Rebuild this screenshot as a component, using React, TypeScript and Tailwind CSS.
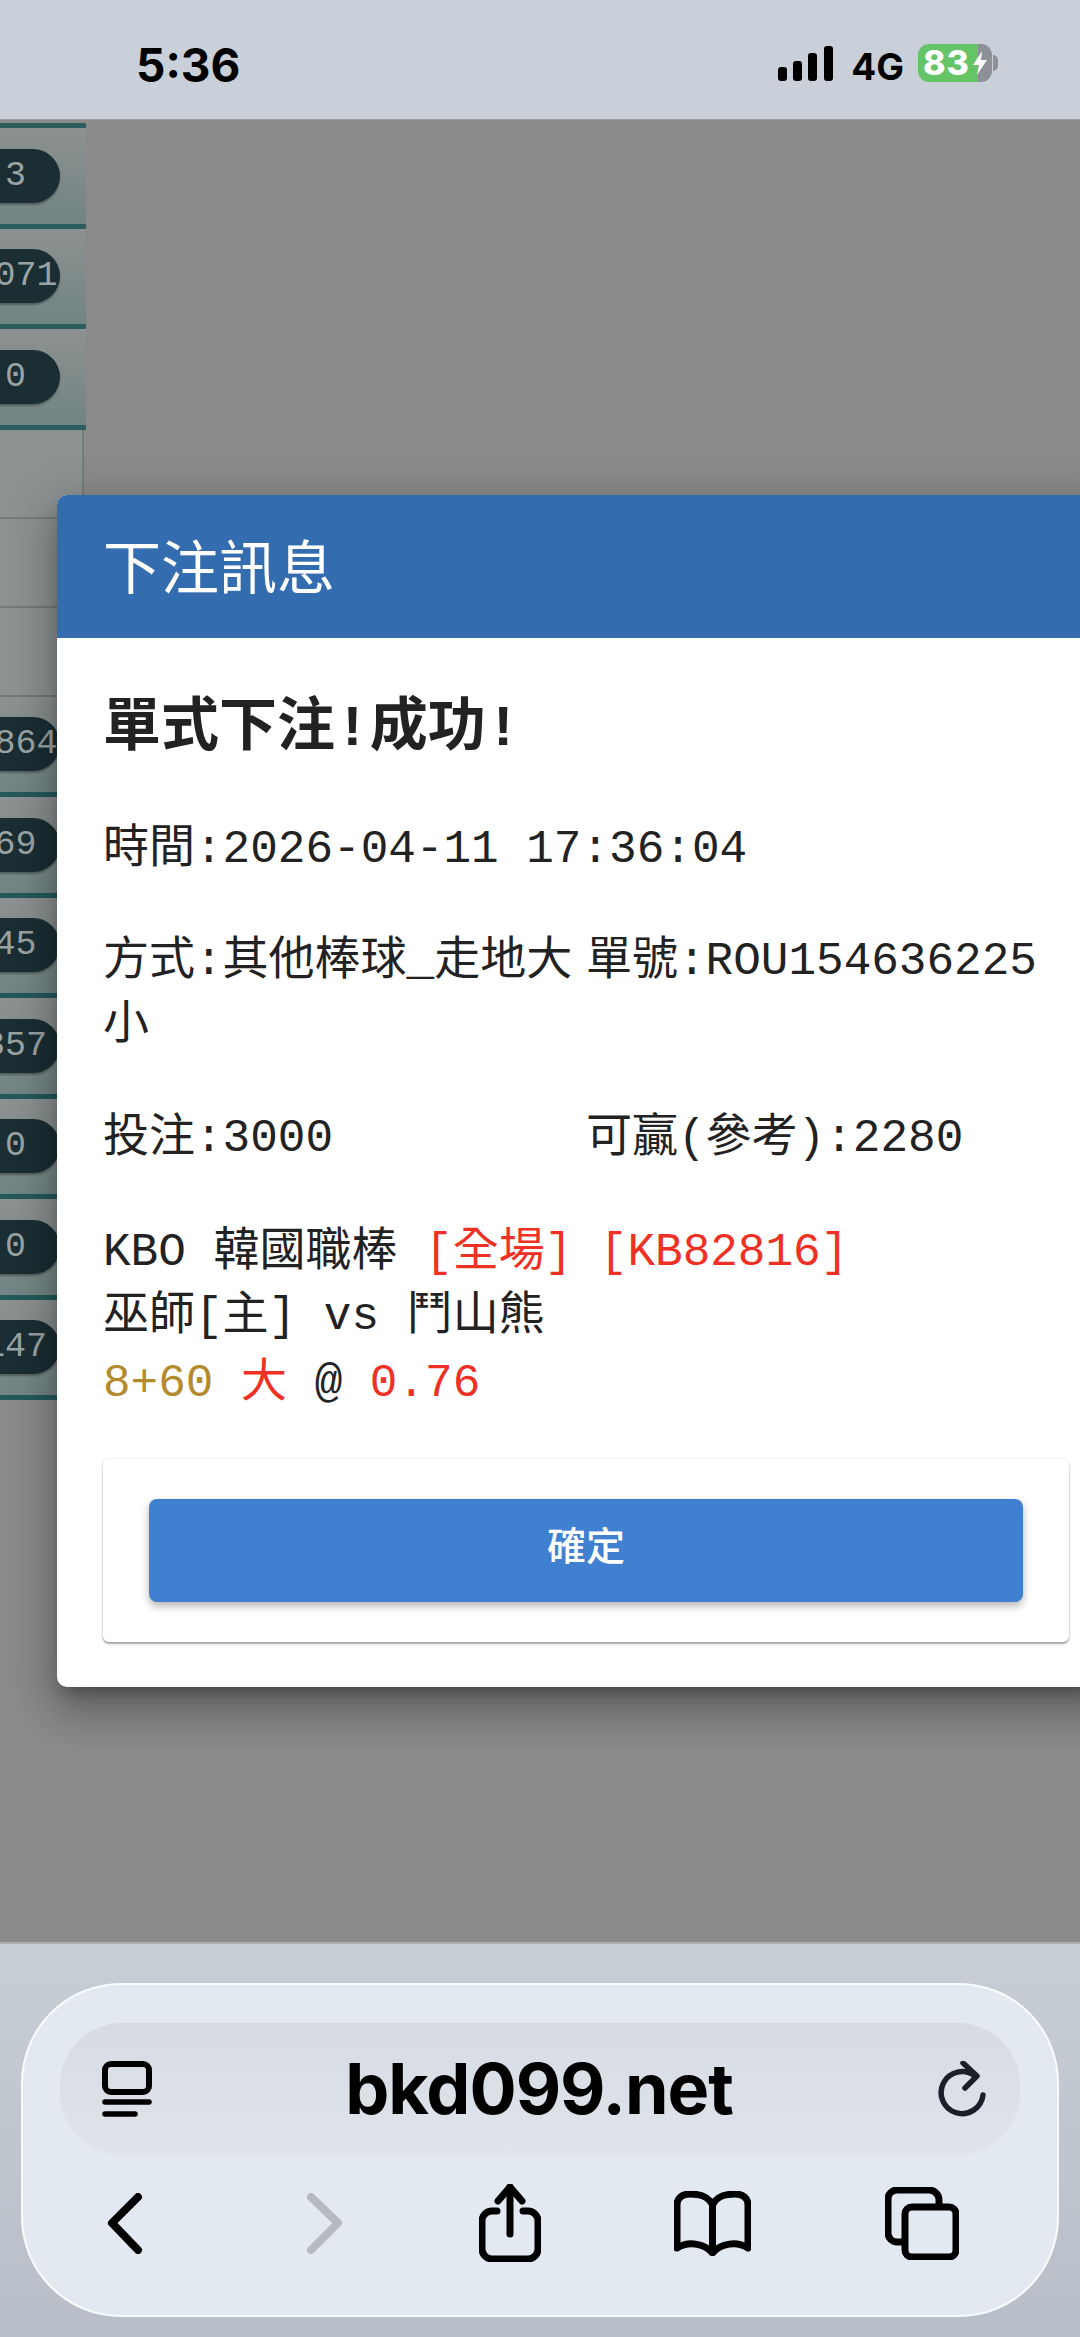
const MONO = "font-['Liberation_Mono','Noto_Sans_CJK_TC',monospace]";

const TOP_ROWS = ["3", "1071", "0"];
const LOWER_ROWS = ["3864", "69", "45", "357", "0", "0", "147"];

function Pill({ value }: { value: string }) {
  return (
    <div className="ml-[-29px] flex h-[54px] w-[89px] shrink-0 items-center justify-center whitespace-nowrap rounded-full bg-[#1a2e33] text-[35px] text-[#9aa3a3] shadow-[0_2px_2px_rgba(0,0,0,0.3)]">
      {value}
    </div>
  );
}

function BackgroundTable() {
  return (
    <div className={`w-[86px] overflow-hidden pt-[3px] ${MONO}`}>
      <div className="border-t-[5px] border-[#2a5d5e]" />
      {TOP_ROWS.map((v, i) => (
        <div
          key={i}
          className="flex h-[100.5px] items-center border-b-[5px] border-[#2a5d5e] bg-gradient-to-b from-[#8d9191] to-[#718583]"
        >
          <Pill value={v} />
        </div>
      ))}
      {[0, 1, 2].map((i) => (
        <div
          key={i}
          className="h-[89px] w-[84px] border-r-[2px] border-b-[2px] border-[#777a7a] bg-[#8c9292]"
        />
      ))}
      {LOWER_ROWS.map((v, i) => (
        <div
          key={i}
          className="flex h-[100.5px] items-center border-b-[5px] border-[#24595c] bg-gradient-to-b from-[#8d9191] to-[#718583]"
        >
          <Pill value={v} />
        </div>
      ))}
    </div>
  );
}

function StatusBar() {
  return (
    <div className="relative flex h-[119px] shrink-0 items-start bg-[#c9d0d9] font-['Inter',sans-serif] text-black">
      <div className="ml-[136px] mt-[35px] text-[46px] font-bold leading-[60px]">5:36</div>
      <div className="ml-auto mr-[82px] mt-[44px] flex items-start">
        <svg width="55" height="37" viewBox="0 0 55 37" className="mt-[2px]">
          <rect x="0" y="21" width="9" height="14" rx="3" fill="#000" />
          <rect x="15" y="15" width="9" height="20" rx="3" fill="#000" />
          <rect x="30" y="7" width="9" height="28" rx="3" fill="#000" />
          <rect x="46" y="0" width="9" height="35" rx="3" fill="#000" />
        </svg>
        <div className="ml-[18px] mt-[1px] text-[37px] font-bold leading-[44px]">4G</div>
        <div className="ml-[14px] flex h-[38px] w-[74px] items-center overflow-hidden rounded-[11px] bg-[linear-gradient(90deg,#65c466_81%,#8e9097_81%)] pl-[5px]">
          <span className="text-[34px] font-extrabold leading-none tracking-[1px] text-white">83</span>
          <svg width="14" height="24" viewBox="0 0 14 24" className="ml-[3px] shrink-0">
            <polygon points="9,0 0,14 6,14 4,24 14,9 8,9" fill="#fff" />
          </svg>
        </div>
        <div className="ml-[1px] mt-[11px] h-[16px] w-[5px] rounded-r-full bg-[#8e9097]" />
      </div>
    </div>
  );
}

function Modal() {
  return (
    <div className="absolute left-[57px] top-[375px] w-[1055px] overflow-hidden rounded-[10px] bg-white shadow-[0_11px_15px_-7px_rgba(0,0,0,0.3),0_24px_38px_3px_rgba(0,0,0,0.2),0_9px_46px_8px_rgba(0,0,0,0.14)]">
      <div className="flex h-[143px] items-center bg-[#336db0] pb-[6px] pl-[46px] font-['Noto_Sans_CJK_TC',sans-serif] text-[58px] leading-none text-white">
        下注訊息
      </div>
      <div className={`pb-[45px] pl-[46px] pr-[43px] pt-[60px] text-[46px] leading-[64px] text-[#222] ${MONO}`}>
        <div className="text-[58px] font-bold">單式下注!成功!</div>
        <div className="mt-[56px]">時間:2026-04-11 17:36:04</div>
        <div className="mt-[48px] grid grid-cols-[483px_1fr]">
          <div>方式:其他棒球_走地大 小</div>
          <div>單號:ROU154636225</div>
        </div>
        <div className="mt-[49px] grid grid-cols-[483px_1fr]">
          <div>投注:3000</div>
          <div>可贏(參考):2280</div>
        </div>
        <div className="mt-[50px] whitespace-pre">
          <div>
            KBO 韓國職棒 <span className="text-[#ee3124]">[全場] [KB82816]</span>
          </div>
          <div>巫師[主] vs 鬥山熊</div>
          <div className="mt-[3px]">
            <span className="text-[#b38b2e]">8+60</span> <span className="text-[#ee3124]">大</span> @{" "}
            <span className="text-[#ee3124]">0.76</span>
          </div>
        </div>
        <div className="mt-[43px] rounded-[6px] bg-white pl-[46px] pr-[46px] py-[40px] shadow-[0_2px_2px_rgba(0,0,0,0.35),0_0_3px_rgba(0,0,0,0.1)]">
          <button className="flex h-[103px] w-full items-center justify-center rounded-[8px] bg-[#4080d0] pb-[15px] font-['Noto_Sans_CJK_TC',sans-serif] text-[39px] font-medium text-white shadow-[0_4px_8px_rgba(0,0,0,0.3)]">
            確定
          </button>
        </div>
      </div>
    </div>
  );
}

function BottomBar() {
  return (
    <div className="h-[395px] shrink-0 border-t-[2px] border-[#a9aeb5] bg-gradient-to-b from-[#c8ced6] to-[#b7bec7] px-[21px] pt-[39px]">
      <div className="h-[334px] rounded-[100px] border-[2px] border-white/80 bg-[#e3e9f1] pt-[38px]">
        <div className="mx-[37px] flex h-[132px] items-center justify-between rounded-[62px] bg-gradient-to-b from-[#d7dce4] to-[#dfe4eb] pl-[42px] pr-[34px]">
          <svg width="50" height="56" viewBox="0 0 50 56">
            <rect x="3" y="3" width="44" height="28" rx="6" fill="none" stroke="#000" strokeWidth="6" />
            <line x1="3" y1="41" x2="47" y2="41" stroke="#000" strokeWidth="5.5" strokeLinecap="round" />
            <line x1="3" y1="53" x2="33" y2="53" stroke="#000" strokeWidth="5.5" strokeLinecap="round" />
          </svg>
          <div className="mr-[12px] font-['Inter',sans-serif] text-[70px] font-bold leading-none tracking-[-1px] text-black">bkd099.net</div>
          <svg width="48" height="56" viewBox="0 0 48 56" fill="none" stroke="#1a1f2a" strokeWidth="5.5" strokeLinecap="round" strokeLinejoin="round">
            <path d="M37 15 A 21 21 0 1 0 45 34" />
            <path d="M25 2 L39 15 L27 27" />
          </svg>
        </div>
        <div className="mt-[29px] flex items-center pl-[84px]">
          <svg width="36" height="61" viewBox="0 0 36 61" fill="none" stroke="#000" strokeWidth="8" strokeLinecap="round" strokeLinejoin="round">
            <polyline points="31,4 5,30 31,57" />
          </svg>
          <svg width="37" height="61" viewBox="0 0 37 61" fill="none" stroke="#b5b9c0" strokeWidth="8" strokeLinecap="round" strokeLinejoin="round" className="ml-[163px]">
            <polyline points="5,4 32,30 5,57" />
          </svg>
          <svg width="62" height="78" viewBox="0 0 62 78" fill="none" stroke="#000" strokeWidth="7" strokeLinecap="round" strokeLinejoin="round" className="ml-[136px]">
            <path d="M31 50 V3" />
            <path d="M19 17 L31 3 L43 17" />
            <path d="M18 27 H13 a10 10 0 0 0 -10 10 V65 a10 10 0 0 0 10 10 H49 a10 10 0 0 0 10 -10 V37 a10 10 0 0 0 -10 -10 H44" />
          </svg>
          <svg width="77" height="65" viewBox="0 0 77 65" fill="none" stroke="#000" strokeWidth="7" strokeLinecap="round" strokeLinejoin="round" className="ml-[133px]">
            <path d="M38.5 60 V14 C34 5 26 3 16 3 C8 3 3 7 3 14 V57 C14 50 30 52 38.5 62 C47 52 63 50 74 57 V14 C74 7 69 3 61 3 C51 3 43 5 38.5 14" />
          </svg>
          <svg width="74" height="73" viewBox="0 0 74 73" fill="none" stroke="#000" strokeWidth="7" strokeLinejoin="round" className="ml-[134px]">
            <path d="M17 55 H12 a9 9 0 0 1 -9 -9 V12 a9 9 0 0 1 9 -9 H44 a10 10 0 0 1 10 10 V17" />
            <rect x="20" y="20" width="51" height="50" rx="7" />
          </svg>
        </div>
      </div>
    </div>
  );
}

export default function App() {
  return (
    <div className="flex h-[2337px] w-[1080px] flex-col overflow-hidden bg-[#8a8a8a]">
      <StatusBar />
      <div className="relative flex-1 overflow-hidden border-t-[1px] border-[#9a9ea3]">
        <BackgroundTable />
        <Modal />
      </div>
      <BottomBar />
    </div>
  );
}
